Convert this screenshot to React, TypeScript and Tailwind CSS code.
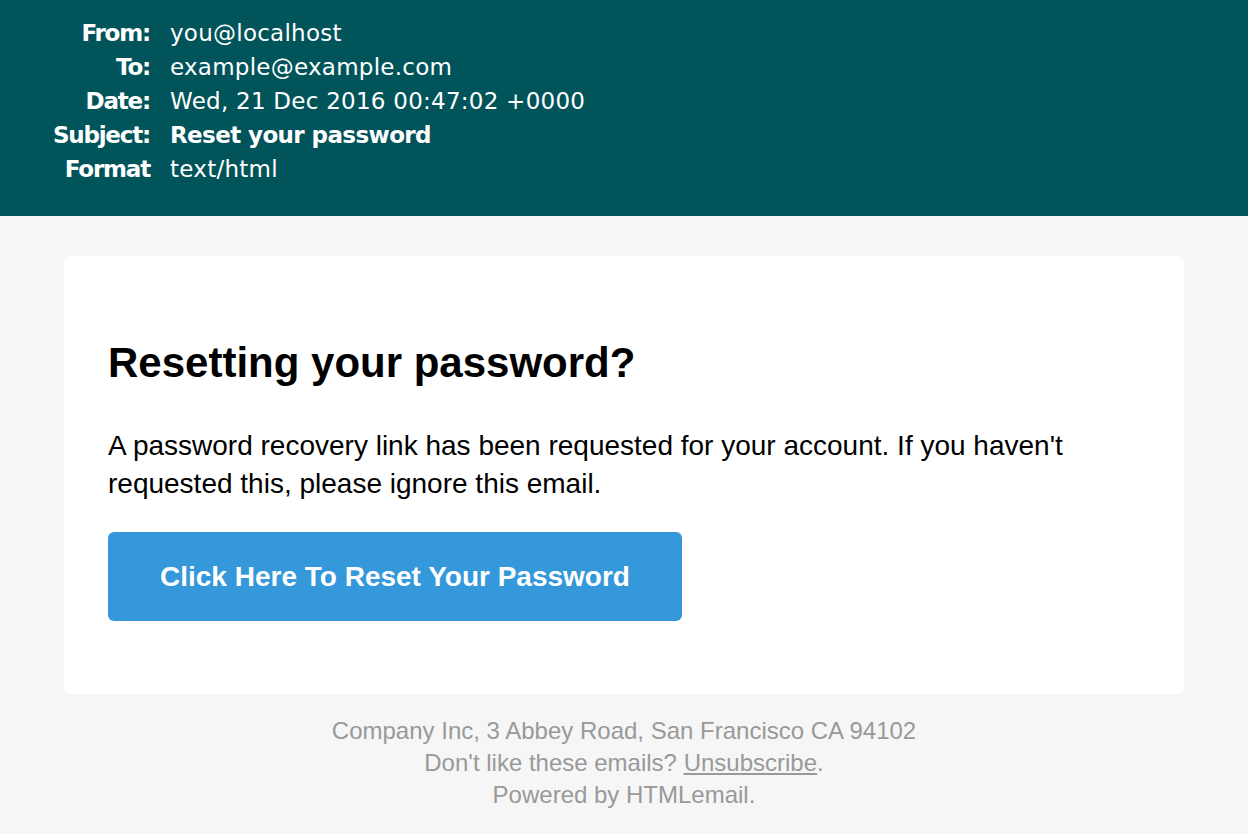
import React from 'react';

const headers = [
  { label: 'From:', value: 'you@localhost' },
  { label: 'To:', value: 'example@example.com' },
  { label: 'Date:', value: 'Wed, 21 Dec 2016 00:47:02 +0000' },
  { label: 'Subject:', value: 'Reset your password', bold: true },
  { label: 'Format', value: 'text/html' },
];

const App: React.FC = () => {
  return (
    <div className="min-h-[834px] bg-[#f6f6f6]">
      {/* mail headers */}
      <div className="bg-[#02545b] pt-[16px] pb-[30px] text-white font-['DejaVu_Sans',sans-serif] text-[23px] leading-[34px]">
        {headers.map(h => (
          <div key={h.label} className="flex">
            <div className="w-[150px] text-right font-bold tracking-[-1.2px]">{h.label}</div>
            <div className={h.bold ? 'pl-[20px] font-bold tracking-[-0.6px]' : 'pl-[20px] tracking-[0.25px]'}>
              {h.value}
            </div>
          </div>
        ))}
      </div>

      <div className="font-['Liberation_Sans',Arial,sans-serif] px-[64px] pt-[40px]">
        <div className="bg-white rounded-[6px] px-[44px] pt-[82px] pb-[73px]">
          <h1 className="text-[42px] leading-[50px] font-bold text-black">Resetting your password?</h1>
          <p className="mt-[39px] text-[28px] leading-[38px] text-black">
            A password recovery link has been requested for your account. If you haven't requested this, please ignore this email.
          </p>
          <a
            href="#"
            className="mt-[29px] flex items-center justify-center w-[574px] h-[89px] rounded-[6px] bg-[#3498db] text-white text-[28px] font-bold"
          >
            Click Here To Reset Your Password
          </a>
        </div>

        <div className="mt-[21px] text-center text-[#999999] text-[24px] leading-[32px]">
          <p>Company Inc, 3 Abbey Road, San Francisco CA 94102</p>
          <p>
            Don't like these emails? <a href="#" className="underline text-[#999999]">Unsubscribe</a>.
          </p>
          <p>Powered by HTMLemail.</p>
        </div>
      </div>
    </div>
  );
};

export default App;
